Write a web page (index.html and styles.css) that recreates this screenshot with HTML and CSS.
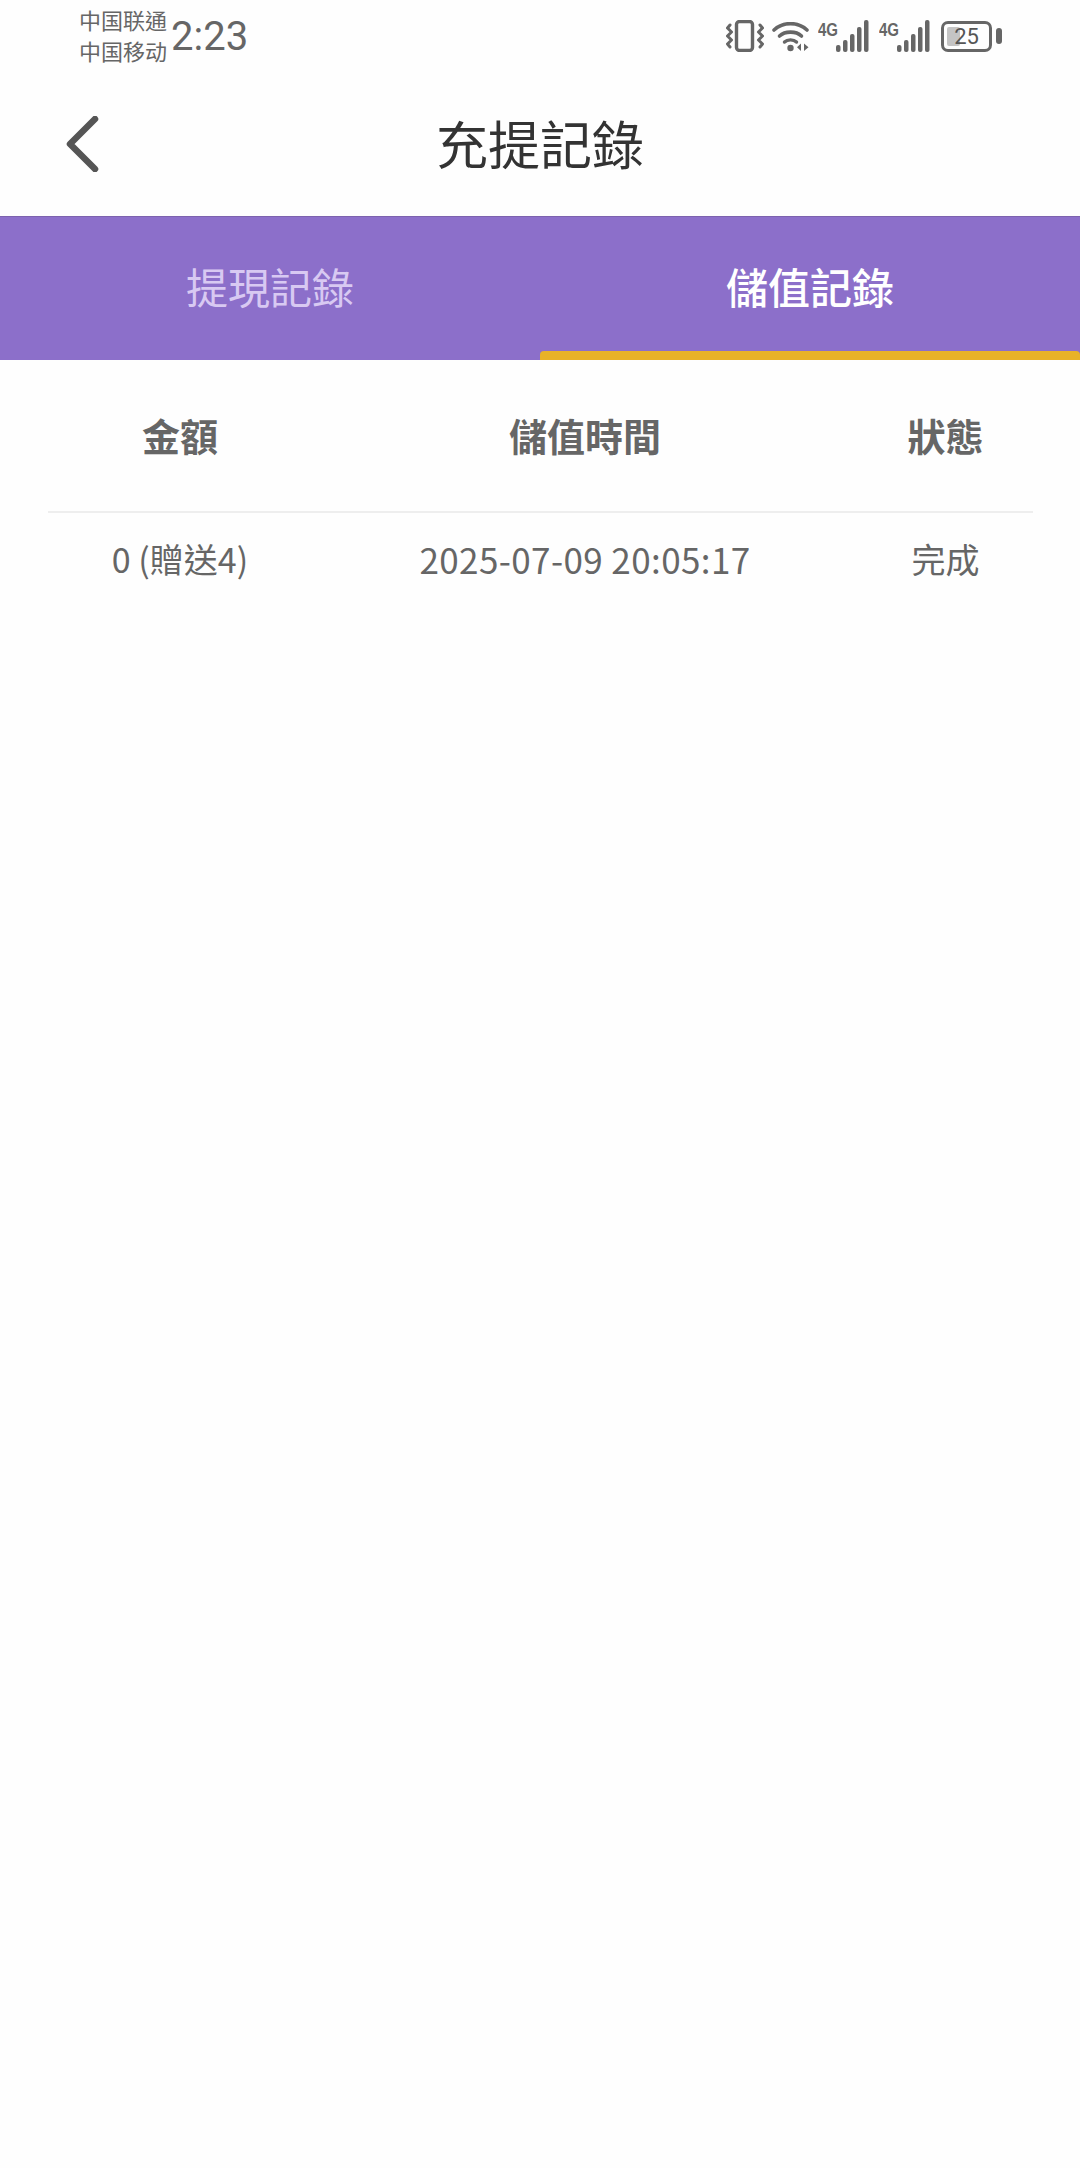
FILE: index.html
```html
<!DOCTYPE html>
<html lang="zh-Hant">
<head>
<meta charset="utf-8">
<title>充提記錄</title>
<link rel="stylesheet" href="styles.css">
</head>
<body>
<div class="status">
  <div class="carriers"><span>中国联通</span><span>中国移动</span></div>
  <div class="time">2:23</div>
  <div class="sys">
    <svg class="ic-vib" width="38" height="32" viewBox="0 0 38 32" fill="none" stroke="#666" stroke-linecap="round" stroke-linejoin="round">
      <rect x="10.5" y="1.5" width="16" height="29" rx="3" stroke-width="3.4"/>
      <path d="M4 5 L1.5 8 L5.5 12 L1.5 16 L5.5 20 L1.5 24 L4 27" stroke-width="3"/>
      <path d="M34 5 L36.5 8 L32.5 12 L36.5 16 L32.5 20 L36.5 24 L34 27" stroke-width="3"/>
    </svg>
    <svg class="ic-wifi" width="38" height="30" viewBox="0 0 38 30" fill="none" stroke="#666" stroke-linecap="round">
      <path d="M2 8 C11 -0.5 26 -0.5 35 8" stroke-width="3.6"/>
      <path d="M7.5 14 C13 8.8 24 8.8 29.5 14" stroke-width="3.6"/>
      <path d="M12.5 20 C15.5 17.2 21.5 17.2 24.5 20" stroke-width="3.4"/>
      <circle cx="18.5" cy="26" r="3.2" fill="#666" stroke="none"/>
      <path d="M29 21.5 L29 29 L25 25.2 Z M32 21.5 L32 29 L36.5 25.2 Z" fill="#666" stroke="none"/>
    </svg>
    <div class="net">
      <span class="g">4G</span>
      <svg width="33" height="32" viewBox="0 0 33 32" fill="#666"><rect x="0" y="25" width="4.5" height="7" rx="2"/><rect x="7" y="20" width="4.5" height="12" rx="2"/><rect x="14" y="14" width="4.5" height="18" rx="2"/><rect x="21" y="7" width="4.5" height="25" rx="2"/><rect x="28" y="0" width="4.5" height="32" rx="2"/></svg>
    </div>
    <div class="net net2">
      <span class="g">4G</span>
      <svg width="33" height="32" viewBox="0 0 33 32" fill="#666"><rect x="0" y="25" width="4.5" height="7" rx="2"/><rect x="7" y="20" width="4.5" height="12" rx="2"/><rect x="14" y="14" width="4.5" height="18" rx="2"/><rect x="21" y="7" width="4.5" height="25" rx="2"/><rect x="28" y="0" width="4.5" height="32" rx="2"/></svg>
    </div>
    <div class="battery">
      <div class="cell"><div class="level"></div><span class="pct">25</span></div>
      <div class="nub"></div>
    </div>
  </div>
</div>

<header class="nav">
  <svg class="back" width="36" height="56" viewBox="0 0 36 56" fill="none" stroke="#555" stroke-width="6.5" stroke-linecap="round" stroke-linejoin="round"><path d="M30 3 L5 28 L30 53"/></svg>
  <h1 class="title">充提記錄</h1>
</header>

<nav class="tabs">
  <div class="tab">提現記錄</div>
  <div class="tab tab-active">儲值記錄</div>
</nav>

<section class="table">
  <div class="row row-head">
    <div class="cell-t">金額</div>
    <div class="cell-t">儲值時間</div>
    <div class="cell-t">狀態</div>
  </div>
  <div class="row row-body">
    <div class="cell-t">0 (贈送4)</div>
    <div class="cell-t date">2025-07-09 20:05:17</div>
    <div class="cell-t">完成</div>
  </div>
</section>
</body>
</html>
```
FILE: styles.css
```css
* { box-sizing: border-box; }
html, body { margin: 0; padding: 0; }
body {
  width: 1080px;
  height: 2168px;
  background: #fefefe;
  font-family: "Noto Sans CJK TC", "Noto Sans", sans-serif;
  color: #666;
  overflow: hidden;
}
.status {
  height: 72px;
  display: flex;
  align-items: flex-start;
  padding: 4px 78px 0 79px;
}
.carriers {
  display: flex;
  flex-direction: column;
  font-size: 22px;
  line-height: 31px;
  width: 92px;
  color: #666;
}
.time {
  font-family: Roboto, sans-serif;
  font-size: 40px;
  line-height: 66px;
  color: #666;
}
.sys {
  margin-left: auto;
  display: flex;
  align-items: flex-start;
  padding-top: 16px;
}
.ic-wifi { margin-left: 8px; margin-top: 2px; }
.net { display: flex; align-items: flex-start; margin-left: 8px; }
.net2 { margin-left: 10px; }
.g {
  font-family: "Liberation Sans", sans-serif;
  font-weight: 700;
  font-size: 15px;
  line-height: 15px;
  width: 18px;
  color: #666;
  transform: scaleY(1.25);
  transform-origin: top left;
}
.battery { display: flex; align-items: center; margin-left: 11px; height: 32px; }
.cell {
  position: relative;
  width: 51px;
  height: 31px;
  border: 3px solid #666;
  border-radius: 7px;
}
.level {
  position: absolute;
  left: 3px;
  top: 3px;
  bottom: 3px;
  width: 13px;
  border-radius: 2px;
  background: #c4c4c4;
}
.pct {
  position: absolute;
  inset: 0;
  text-align: center;
  font-family: Roboto, sans-serif;
  font-size: 22px;
  line-height: 25px;
  color: #555;
}
.nub { width: 6px; height: 16px; margin-left: 4px; border-radius: 3px; background: #666; }
.nav {
  height: 144px;
  position: relative;
  display: flex;
  align-items: center;
  justify-content: center;
}
.back { position: absolute; left: 65px; top: 44px; }
.title {
  margin: 0;
  font-size: 52px;
  font-weight: 400;
  line-height: 72px;
  color: #333;
  position: relative;
  top: -1px;
}
.tabs {
  height: 144px;
  display: grid;
  grid-template-columns: 1fr 1fr;
  background: #8c6fca;
  border-top: 1px solid #7c62ae;
}
.tab {
  display: flex;
  align-items: center;
  justify-content: center;
  padding-bottom: 7px;
  font-size: 42px;
  color: #d8c9f2;
}
.tab-active {
  color: #fff;
  font-weight: 500;
  position: relative;
}
.tab-active::after {
  content: "";
  position: absolute;
  left: 0;
  right: 0;
  bottom: 0;
  height: 9px;
  border-radius: 4px 4px 0 0;
  background: #e8b228;
}
.table { margin: 0 47px 0 48px; }
.row {
  display: grid;
  grid-template-columns: 264px 546px 175px;
  text-align: center;
}
.row-head {
  height: 153px;
  align-items: center;
  padding-bottom: 3px;
  font-size: 38px;
  font-weight: 700;
  border-bottom: 2px solid #eeeeee;
}
.row-body {
  padding-top: 12px;
  font-size: 34px;
  line-height: 68px;
}
.date {
  font-size: 35px;
  letter-spacing: 0.4px;
}
```
